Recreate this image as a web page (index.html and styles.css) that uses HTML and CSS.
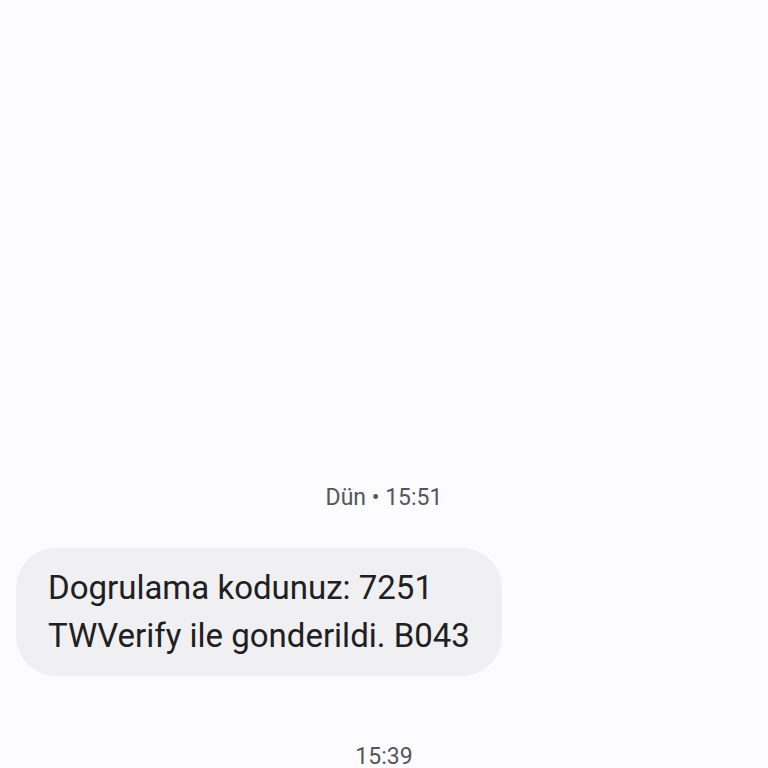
FILE: index.html
```
<!DOCTYPE html>
<html lang="tr">

<head>
  <meta charset="UTF-8" />
  <meta name="viewport" content="width=device-width, initial-scale=1" />
  <title>Mesajlar</title>
  <link rel="stylesheet" href="styles.css">
</head>

<body>
  <main class="chat">
    <time class="timestamp">Dün • 15:51</time>
    <p class="message">Dogrulama kodunuz: 7251<br>TWVerify ile gonderildi. B043</p>
    <time class="timestamp">15:39</time>
  </main>
</body>

</html>
```
FILE: styles.css
```
* {
  box-sizing: border-box;
}

body {
  margin: 0;
  background: #fcfcff;
  font-family: Roboto, "Open Sans", sans-serif;
}

/* messages stick to the bottom of the window */
.chat {
  min-height: 100vh;
  padding: 0 16px;
  display: flex;
  flex-direction: column;
  justify-content: flex-end;
}

.timestamp {
  align-self: center;
  color: #55565a;
  font-size: 23px;
  line-height: 22px;
}

.message {
  align-self: flex-start;
  margin: 39px 0 70px;
  padding: 16px 32px;
  border-radius: 40px;
  background: #f0eff1;
  color: #202024;
  font-size: 33px;
  line-height: 48px;
}
```
